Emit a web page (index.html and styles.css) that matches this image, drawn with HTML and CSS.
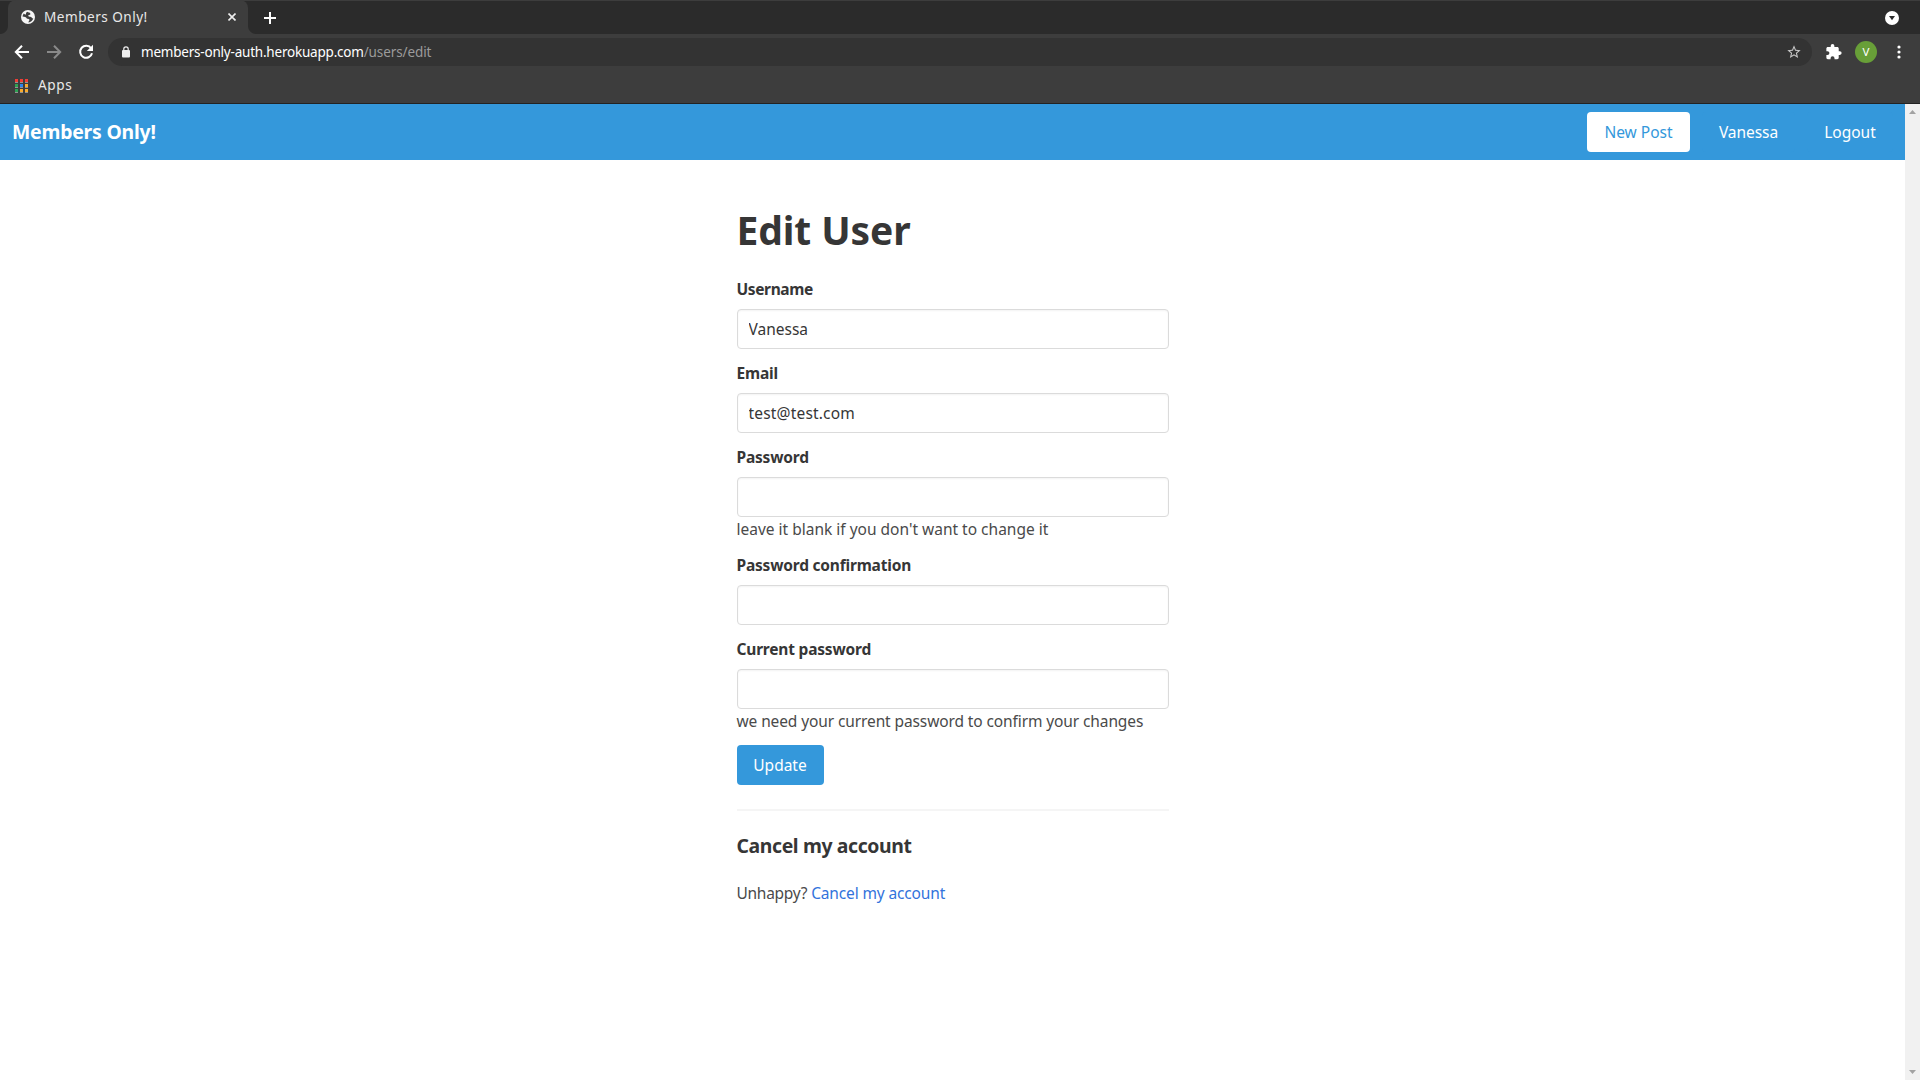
FILE: index.html
```
<!DOCTYPE html>
<html lang="en">
<head>
<meta charset="utf-8">
<title>Members Only!</title>
<link rel="stylesheet" href="styles.css">
</head>
<body>
<div class="browser">
  <div class="tabstrip">
    <div class="tab">
      <svg class="globe" width="14" height="14" viewBox="0 0 14 14"><circle cx="7" cy="7" r="7" fill="#f5f5f5"/><path d="M6.3 1.8C7.2 2.8 9 2.2 9.4 3.7 9.6 4.7 8.3 5 7.4 5.2 6.8 5.9 7.7 6.8 9 6.7 10.6 6.6 10.6 8.3 12.3 8.6 11.4 11 9.8 12.3 7.4 12.6 7.3 11.2 8.8 10.8 8.4 9.5 7.4 8.7 5.900 9.4 5.5 8 5.2 6.9 3.5 7.2 1.5 6.5 1.6 5.7 2.1 4.5 2.8 3.6 4.2 5.1 5.4 4.6 5 3.4 4.9 2.8 5.5 2.3 6.3 1.8Z" fill="#3d3d3d"/></svg>
      <span class="tab-title">Members Only!</span>
      <svg class="tab-close" width="8" height="8" viewBox="0 0 8 8"><path d="M.5.5l7 7M7.5.5l-7 7" stroke="#eee" stroke-width="1.6"/></svg>
    </div>
    <svg class="new-tab" width="12" height="12" viewBox="0 0 12 12"><path d="M6 0v12M0 6h12" stroke="#fff" stroke-width="2"/></svg>
    <svg class="tab-search" width="14" height="14" viewBox="0 0 14 14"><circle cx="7" cy="7" r="7" fill="#fff"/><path d="M4 5h6L7 9.3z" fill="#2b2b2b"/></svg>
  </div>
  <div class="toolbar">
    <svg class="back" width="16" height="16" viewBox="0 0 16 16"><path d="M15 8H2.2M8 1.7L1.8 8 8 14.3" fill="none" stroke="#fff" stroke-width="2"/></svg>
    <svg class="forward" width="16" height="16" viewBox="0 0 16 16"><path d="M1 8h12.8M8 1.7L14.2 8 8 14.3" fill="none" stroke="#8a8a8a" stroke-width="2"/></svg>
    <svg class="reload" width="16" height="16" viewBox="0 0 16 16"><path d="M13.1 4.3A6 6 0 1 0 14 9.2" fill="none" stroke="#fff" stroke-width="2"/><path d="M15 .8V7H8.8z" fill="#fff"/></svg>
    <div class="omnibox">
      <svg class="lock" width="8" height="12" viewBox="0 0 8 12"><rect y="4" width="8" height="7.500" rx="1" fill="#eee"/><path d="M1.8 4.5V3a2.2 2.2 0 0 1 4.4 0v1.5" fill="none" stroke="#eee" stroke-width="1.2"/></svg>
      <span class="host">members-only-auth.herokuapp.com</span><span class="path">/users/edit</span>
      <svg class="star" width="16" height="16" viewBox="0 0 24 24"><path d="M22 9.24l-7.19-.62L12 2 9.19 8.63 2 9.24l5.46 4.73L5.82 21 12 17.27 18.18 21l-1.63-7.03L22 9.24zM12 15.4l-3.76 2.27 1-4.28-3.32-2.88 4.38-.38L12 6.1l1.71 4.04 4.38.38-3.32 2.88 1 4.28L12 15.4z" fill="#c8c8c8"/></svg>
    </div>
    <svg class="puzzle" width="16" height="16" viewBox="1.5 1 22 22"><path d="M20.5 11H19V7c0-1.1-.9-2-2-2h-4V3.500a2.500 2.500 0 0 0-5 0V5H4c-1.100 0-2 .9-2 2v3.800h1.500a2.700 2.700 0 0 1 0 5.400H2V20c0 1.100.9 2 2 2h3.800v-1.500a2.700 2.700 0 0 1 5.400 0V22H17c1.100 0 2-.9 2-2v-4h1.500a2.500 2.500 0 0 0 0-5z" fill="#fff"/></svg>
    <span class="avatar">V</span>
    <svg class="menu" width="4" height="14" viewBox="0 0 4 14"><circle cx="2" cy="2" r="1.600" fill="#fff"/><circle cx="2" cy="7" r="1.600" fill="#fff"/><circle cx="2" cy="12" r="1.600" fill="#fff"/></svg>
  </div>
  <div class="bookmarks">
    <div class="apps-icon"><i class="red"></i><i class="red"></i><i class="red"></i><i class="green"></i><i class="blue"></i><i class="amber"></i><i class="green"></i><i class="amber"></i><i class="amber"></i></div>
    <span class="apps">Apps</span>
  </div>
</div>
<div class="viewport">
  <div class="page">
    <nav class="navbar">
      <a class="brand">Members Only!</a>
      <a class="button new-post">New Post</a>
      <a class="button user">Vanessa</a>
      <a class="button logout">Logout</a>
    </nav>
    <main class="container">
      <h1 class="title">Edit User</h1>
      <form>
        <div class="field"><label class="label tight" for="name">Username</label><input class="input" id="name" type="text" value="Vanessa"></div>
        <div class="field"><label class="label" for="email">Email</label><input class="input mail" id="email" type="text" value="test@test.com"></div>
        <div class="field"><label class="label" for="pw">Password</label><input class="input" id="pw" type="password"><p class="help">leave it blank if you don't want to change it</p></div>
        <div class="field"><label class="label" for="pw2">Password confirmation</label><input class="input" id="pw2" type="password"></div>
        <div class="field"><label class="label" for="cur">Current password</label><input class="input" id="cur" type="password"><p class="help narrow">we need your current password to confirm your changes</p></div>
        <button class="button update" type="button">Update</button>
      </form>
      <hr class="divider">
      <h3 class="subtitle">Cancel my account</h3>
      <p class="cancel"><span class="unhappy">Unhappy?</span><a class="link">Cancel my account</a></p>
    </main>
  </div>
  <div class="scrollbar">
    <svg width="7" height="4" viewBox="0 0 7 4"><path d="M3.500 0L7 4H0z" fill="#a3a3a3"/></svg>
    <svg width="7" height="4" viewBox="0 0 7 4"><path d="M0 0h7L3.500 4z" fill="#a3a3a3"/></svg>
  </div>
</div>
</body>
</html>
```
FILE: styles.css
```
* { box-sizing: border-box; margin: 0; padding: 0; }
body {
  height: 1080px; overflow: hidden; display: flex; flex-direction: column;
  font: 15.5px/24px "Noto Sans", sans-serif; color: #4a4a4a; background: #fff;
}
svg { display: block; flex: none; }

.browser { height: 104px; flex: none; background: #3d3d3d; border-bottom: 1px solid #232323; font-size: 13.6px; color: #e8e8e8; }
.tabstrip { height: 34px; display: flex; align-items: center; background: #2b2b2b; border-top: 1px solid #3d3d3d; padding: 0 21px 0 8px; }
.tab { position: relative; width: 240px; height: 34px; margin-top: -1px; border-radius: 8px 8px 0 0; background: #3d3d3d; display: flex; align-items: center; padding: 0 12px 0 13px; }
.tab::before, .tab::after { content: ""; position: absolute; bottom: 0; width: 8px; height: 8px; }
.tab::before { left: -8px; background: radial-gradient(circle at 0 0, #2b2b2b 7.5px, #3d3d3d 8.5px); }
.tab::after { right: -8px; background: radial-gradient(circle at 100% 0, #2b2b2b 7.5px, #3d3d3d 8.5px); }
.tab-title { margin-left: 9px; letter-spacing: .48px; }
.tab-close { margin-left: auto; }
.new-tab { margin-left: 16px; }
.tab-search { margin-left: auto; }

.toolbar { height: 36px; display: flex; align-items: center; padding: 0 19px 0 14px; }
.forward { margin-left: 16px; }
.reload { margin-left: 16px; }
.omnibox { flex: 1; height: 28px; margin-left: 14px; border-radius: 14px; background: #333; display: flex; align-items: center; padding: 0 10px 0 14px; font-size: 13.5px; }
.host { margin-left: 11px; color: #fff; letter-spacing: -.21px; }
.path { color: #9b9b9b; letter-spacing: -.1px; }
.star { margin-left: auto; }
.puzzle { margin-left: 14px; }
.avatar { width: 22px; height: 22px; margin-left: 13px; border-radius: 50%; background: #689f38; color: #fff; font-size: 11.5px; line-height: 22px; text-align: center; }
.menu { margin-left: 20px; }

.bookmarks { height: 30px; display: flex; align-items: center; padding-left: 15px; }
.apps-icon { display: grid; grid-template-columns: repeat(3, 3px); gap: 2px; }
.apps-icon i { height: 3px; box-shadow: 0 1px rgba(255, 255, 255, .45); }
.red { background: #ef3e36; }
.green { background: #2da152; }
.blue { background: #2a84ee; }
.amber { background: #f9ab2d; }
.apps { margin-left: 10px; letter-spacing: .65px; }

.viewport { flex: 1; display: flex; min-height: 0; }
.page { flex: 1; }
.scrollbar { width: 15px; background: #f1f1f1; display: flex; flex-direction: column; align-items: center; justify-content: space-between; padding: 6px 0 6px; }

.navbar { height: 56px; background: #3498db; display: flex; align-items: center; gap: 12px; padding: 0 12px; }
.brand { margin-right: auto; color: #fff; font-size: 19.4px; font-weight: 700; letter-spacing: -.2px; }
.button { height: 40px; border: 1px solid transparent; border-radius: 4px; padding: 7px 0; text-align: center; font: inherit; line-height: 24px; color: #fff; background: #3498db; }
.new-post { width: 103px; background: #fff; color: #3498db; }
.user { width: 93px; letter-spacing: -.05px; }
.logout { width: 86px; }

.container { width: 432px; margin: 0 auto; padding-top: 47px; }
.title { font-size: 39px; line-height: 45px; font-weight: 700; letter-spacing: -.1px; color: #363636; margin-bottom: 25px; }
.field { margin-bottom: 12px; }
.label { display: block; font-weight: 700; letter-spacing: -.2px; color: #363636; margin-bottom: 8px; }
.tight { letter-spacing: -.38px; }
.input { display: block; width: 100%; height: 40px; border: 1px solid #dbdbdb; border-radius: 4px; padding: 7px 11px; box-shadow: inset 0 1px 2px rgba(10, 10, 10, .05); font: inherit; color: #363636; outline: 0; }
.mail { letter-spacing: .18px; }
.narrow { letter-spacing: -.11px; }
.update { display: block; width: 87px; }
.divider { height: 2px; border: 0; background: #f5f5f5; margin: 24px 0; }
.subtitle { font-size: 19.4px; line-height: 22px; font-weight: 700; letter-spacing: -.38px; color: #363636; margin-bottom: 24px; }
.cancel { display: flex; gap: 4px; }
.unhappy { letter-spacing: -.28px; }
.link { color: #3273dc; letter-spacing: -.14px; }
```
